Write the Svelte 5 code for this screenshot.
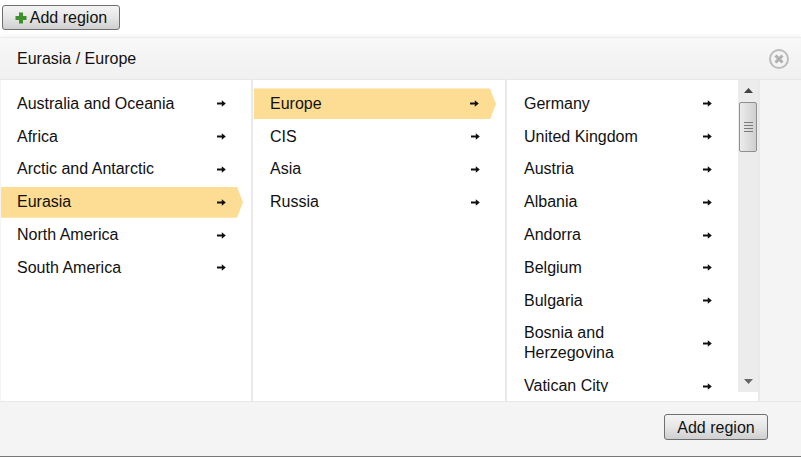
<script lang="ts">
// Region picker: three cascading lists under a toolbar button.
const columns = [
  {
    active: "Eurasia",
    items: ["Australia and Oceania", "Africa", "Arctic and Antarctic", "Eurasia", "North America", "South America"],
  },
  { active: "Europe", items: ["Europe", "CIS", "Asia", "Russia"] },
];
const countries = ["Germany", "United Kingdom", "Austria", "Albania", "Andorra", "Belgium", "Bulgaria", "Bosnia and Herzegovina", "Vatican City"];
</script>

{#snippet arrow()}
  <svg class="arrow" width="9" height="7" viewBox="0 0 9 7" aria-hidden="true">
    <path d="M0 2.6h4.8V0.2L8.8 3.5 4.8 6.8V4.4H0z" fill="#111" />
  </svg>
{/snippet}

<div class="page">
  <button class="btn top-btn">
    <svg width="12" height="12" viewBox="0 0 12 12" aria-hidden="true">
      <path d="M4 0.5h4v3.5h3.5v4H8v3.5H4V8H0.5V4H4z" fill="#3f8f2c" />
    </svg>
    Add region
  </button>

  <section class="panel">
    <header class="panel-head">
      <span>Eurasia / Europe</span>
      <svg class="close" width="20" height="20" viewBox="0 0 20 20" aria-label="Close">
        <circle cx="10" cy="10" r="9" fill="#f4f4f4" stroke="#bcbcbc" stroke-width="2" />
        <path d="M6.5 6.5l7 7M13.5 6.5l-7 7" stroke="#b0b0b0" stroke-width="3" />
      </svg>
    </header>

    <div class="lists">
      {#each columns as col}
        <ul class="col">
          {#each col.items as item}
            <li class="row" class:active={item === col.active}>
              <span>{item}</span>
              {@render arrow()}
            </li>
          {/each}
        </ul>
      {/each}

      <div class="col scroll-col">
        <ul class="clip">
          {#each countries as item}
            <li class="row">
              <span>{item}</span>
              {@render arrow()}
            </li>
          {/each}
        </ul>
        <div class="scrollbar">
          <svg class="tri up" width="9" height="5" viewBox="0 0 9 5"><path d="M0 5L4.5 0 9 5z" fill="#444" /></svg>
          <div class="thumb"><i></i><i></i><i></i><i></i></div>
          <svg class="tri down" width="9" height="5" viewBox="0 0 9 5"><path d="M0 0L4.5 5 9 0z" fill="#666" /></svg>
        </div>
      </div>
    </div>

    <footer class="panel-foot">
      <button class="btn">Add region</button>
    </footer>
  </section>
</div>

<style>
:global(body) {
  margin: 0;
  background: #fff;
}
.page {
  width: 801px;
  height: 457px;
  overflow: hidden;
  font-family: "Liberation Sans", Arial, sans-serif;
  font-size: 16px;
  color: #111;
  padding-top: 5px;
  box-sizing: border-box;
}
.btn {
  appearance: none;
  height: 25px;
  padding: 0 12px;
  border: 1px solid #6f6f6f;
  border-radius: 3px;
  background: linear-gradient(180deg, #f4f4f4 0%, #e6e6e6 50%, #cfcfcf 100%);
  font: inherit;
  color: #111;
  display: inline-flex;
  align-items: center;
  justify-content: center;
}
.top-btn {
  margin-left: 2px;
  width: 118px;
  padding: 0;
  gap: 3px;
  display: flex;
}
.panel {
  margin-top: 7px;
  height: 420px;
  background: #f4f4f4;
  border-top: 1px solid #ececec;
  border-bottom: 1px solid #777;
  box-sizing: border-box;
  display: flex;
  flex-direction: column;
  box-shadow: 0 -2px 3px rgba(0, 0, 0, 0.04);
}
.panel-head {
  height: 42px;
  flex: none;
  box-sizing: border-box;
  padding: 0 12px 0 17px;
  display: flex;
  align-items: center;
  justify-content: space-between;
  background: linear-gradient(180deg, #f8f8f8, #f0f0f0);
  border-bottom: 1px solid #e6e6e6;
}
.lists {
  height: 322px;
  flex: none;
  display: flex;
  padding-left: 1px;
  box-sizing: border-box;
  border-bottom: 1px solid #e8e8e8;
}
.col {
  list-style: none;
  margin: 0;
  padding: 8.4px 0 0;
  width: 252px;
  background: #fff;
  border-right: 2px solid #e9e9e9;
  box-sizing: border-box;
}
.col:nth-child(2) {
  width: 254px;
}
.col:nth-child(2) .row {
  margin-left: 1px;
}
.row {
  padding: 5.5px 25px 5.5px 16px;
  margin-bottom: 1.8px;
  display: flex;
  align-items: center;
  justify-content: space-between;
  line-height: 20px;
  box-sizing: border-box;
}
.row span {
  white-space: nowrap;
}
.clip .row span {
  white-space: normal;
  max-width: 140px;
}
.arrow {
  flex: none;
}
.active {
  background: #fddc93;
  width: 242px;
  padding-right: 17px;
  clip-path: polygon(0 0, 236px 0, 100% 50%, 236px 100%, 0 100%);
}
.scroll-col {
  width: 253px;
  padding: 0;
  display: flex;
  flex: none;
}
.clip {
  list-style: none;
  margin: 0;
  padding: 8.4px 0 0;
  width: 231px;
  box-sizing: border-box;
  height: 312px;
  overflow: hidden;
}
.clip .row {
  padding-left: 17px;
  padding-right: 26px;
}
.scrollbar {
  width: 20px;
  height: 312px;
  background: #ececec;
  display: flex;
  flex-direction: column;
  align-items: center;
}
.tri.up {
  margin-top: 8px;
}
.tri.down {
  margin-top: auto;
  margin-bottom: 8px;
}
.thumb {
  margin-top: 9px;
  width: 18px;
  height: 50px;
  box-sizing: border-box;
  border: 1px solid #8f8f8f;
  border-radius: 2px;
  background: linear-gradient(90deg, #ececec, #cfcfcf);
  display: flex;
  flex-direction: column;
  justify-content: center;
  align-items: center;
  gap: 2px;
}
.thumb i {
  display: block;
  width: 9px;
  height: 1px;
  background: #7a7a7a;
}
.panel-foot {
  flex: 1;
  display: flex;
  justify-content: flex-end;
  align-items: flex-start;
  padding: 12px 33px 0 0;
}
.panel-foot .btn {
  width: 104px;
  height: 26px;
  padding: 1px 0 0;
}
</style>
